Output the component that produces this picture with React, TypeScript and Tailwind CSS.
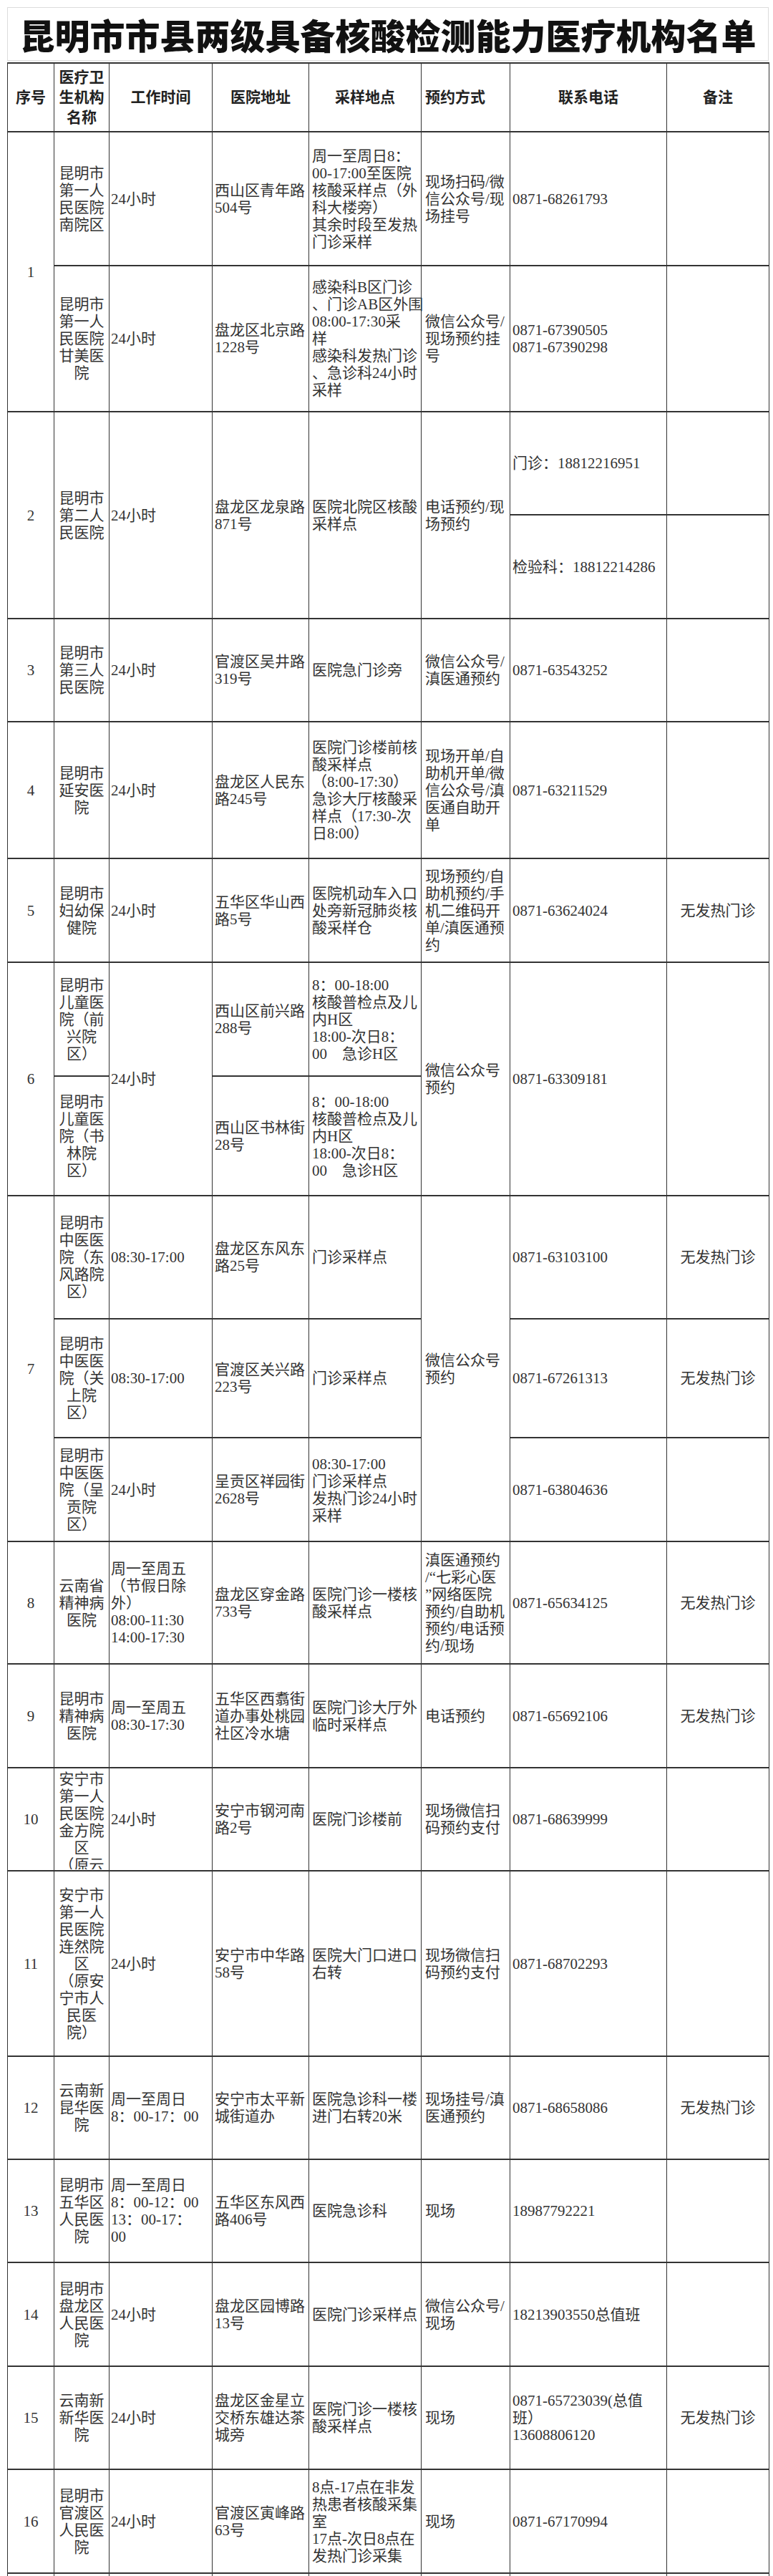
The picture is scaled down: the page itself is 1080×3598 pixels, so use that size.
import React from 'react'

// column paddings / alignment, in order: 序号 … 备注
const colCls = [
  'text-center',
  'text-center',
  'text-left pl-[2px]',
  'text-left pl-[3px]',
  'text-left pl-[4px]',
  'text-left pl-[5px]',
  'text-left pl-[3px]',
  'text-center',
]

const widths = ['w-[65px]', 'w-[77px]', 'w-[144px]', 'w-[135px]', 'w-[157px]', 'w-[124px]', 'w-[219px]', 'w-[143px]']

type TdProps = {
  c: number
  rs?: number
  children?: React.ReactNode
}

function Td({ c, rs, children }: TdProps) {
  return (
    <td
      rowSpan={rs}
      className={`border-x border-y-2 border-[#333] p-0 align-middle whitespace-pre text-[21px] leading-[24px] text-[#333] ${colCls[c]}`}
    >
      {children}
    </td>
  )
}

function Th({ c, children }: { c: number; children: React.ReactNode }) {
  return (
    <th
      className={`border-x border-y-2 border-[#333] p-0 align-middle whitespace-pre text-[21px] leading-[28px] font-bold text-[#222] ${
        c === 5 ? 'text-left pl-[5px]' : 'text-center'
      }`}
    >
      {children}
    </th>
  )
}

// simple row: 8 cells, no spans
function Row({ h, cells }: { h: string; cells: string[] }) {
  return (
    <tr className={h}>
      {cells.map((t, i) => (
        <Td key={i} c={i}>
          {t}
        </Td>
      ))}
    </tr>
  )
}

export default function App() {
  return (
    <div className="w-[1080px] bg-white pl-[10px] pr-[6px] pt-[10px] font-['Liberation_Serif','Noto_Sans_CJK_SC',serif]">
      {/* title */}
      <div className="h-[75px] border border-[#dcdcdc] flex items-center justify-center">
        <h1 className="text-[49px] leading-none font-black text-[#111] font-['Noto_Sans_CJK_SC',sans-serif]">
          昆明市市县两级具备核酸检测能力医疗机构名单
        </h1>
      </div>

      <table className="mt-[2px] w-[1064px] table-fixed border-collapse">
        <colgroup>
          {widths.map((w, i) => (
            <col key={i} className={w} />
          ))}
        </colgroup>
        <thead>
          <tr className="h-[96px]">
            <Th c={0}>序号</Th>
            <Th c={1}>{'医疗卫\n生机构\n名称'}</Th>
            <Th c={2}>工作时间</Th>
            <Th c={3}>医院地址</Th>
            <Th c={4}>采样地点</Th>
            <Th c={5}>预约方式</Th>
            <Th c={6}>联系电话</Th>
            <Th c={7}>备注</Th>
          </tr>
        </thead>
        <tbody>
          {/* 1 */}
          <tr className="h-[187px]">
            <Td c={0} rs={2}>1</Td>
            <Td c={1}>{'昆明市\n第一人\n民医院\n南院区'}</Td>
            <Td c={2}>24小时</Td>
            <Td c={3}>{'西山区青年路\n504号'}</Td>
            <Td c={4}>{'周一至周日8：\n00-17:00至医院\n核酸采样点（外\n科大楼旁）\n其余时段至发热\n门诊采样'}</Td>
            <Td c={5}>{'现场扫码/微\n信公众号/现\n场挂号'}</Td>
            <Td c={6}>0871-68261793</Td>
            <Td c={7} />
          </tr>
          <tr className="h-[204px]">
            <Td c={1}>{'昆明市\n第一人\n民医院\n甘美医\n院'}</Td>
            <Td c={2}>24小时</Td>
            <Td c={3}>{'盘龙区北京路\n1228号'}</Td>
            <Td c={4}>{'感染科B区门诊\n、门诊AB区外围\n08:00-17:30采\n样\n感染科发热门诊\n、急诊科24小时\n采样'}</Td>
            <Td c={5}>{'微信公众号/\n现场预约挂\n号'}</Td>
            <Td c={6}>{'0871-67390505\n0871-67390298'}</Td>
            <Td c={7} />
          </tr>

          {/* 2 */}
          <tr className="h-[144px]">
            <Td c={0} rs={2}>2</Td>
            <Td c={1} rs={2}>{'昆明市\n第二人\n民医院'}</Td>
            <Td c={2} rs={2}>24小时</Td>
            <Td c={3} rs={2}>{'盘龙区龙泉路\n871号'}</Td>
            <Td c={4} rs={2}>{'医院北院区核酸\n采样点'}</Td>
            <Td c={5} rs={2}>{'电话预约/现\n场预约'}</Td>
            <Td c={6}>门诊：18812216951</Td>
            <Td c={7} />
          </tr>
          <tr className="h-[145px]">
            <Td c={6}>检验科：18812214286</Td>
            <Td c={7} />
          </tr>

          <Row
            h="h-[144px]"
            cells={['3', '昆明市\n第三人\n民医院', '24小时', '官渡区吴井路\n319号', '医院急门诊旁', '微信公众号/\n滇医通预约', '0871-63543252', '']}
          />
          <Row
            h="h-[191px]"
            cells={[
              '4',
              '昆明市\n延安医\n院',
              '24小时',
              '盘龙区人民东\n路245号',
              '医院门诊楼前核\n酸采样点\n（8:00-17:30）\n急诊大厅核酸采\n样点（17:30-次\n日8:00）',
              '现场开单/自\n助机开单/微\n信公众号/滇\n医通自助开\n单',
              '0871-63211529',
              '',
            ]}
          />
          <Row
            h="h-[145px]"
            cells={[
              '5',
              '昆明市\n妇幼保\n健院',
              '24小时',
              '五华区华山西\n路5号',
              '医院机动车入口\n处旁新冠肺炎核\n酸采样仓',
              '现场预约/自\n助机预约/手\n机二维码开\n单/滇医通预\n约',
              '0871-63624024',
              '无发热门诊',
            ]}
          />

          {/* 6 */}
          <tr className="h-[159px]">
            <Td c={0} rs={2}>6</Td>
            <Td c={1}>{'昆明市\n儿童医\n院（前\n兴院\n区）'}</Td>
            <Td c={2} rs={2}>24小时</Td>
            <Td c={3}>{'西山区前兴路\n288号'}</Td>
            <Td c={4}>{'8：00-18:00\n核酸普检点及儿\n内H区\n18:00-次日8：\n00　急诊H区'}</Td>
            <Td c={5} rs={2}>{'微信公众号\n预约'}</Td>
            <Td c={6} rs={2}>0871-63309181</Td>
            <Td c={7} rs={2} />
          </tr>
          <tr className="h-[167px]">
            <Td c={1}>{'昆明市\n儿童医\n院（书\n林院\n区）'}</Td>
            <Td c={3}>{'西山区书林街\n28号'}</Td>
            <Td c={4}>{'8：00-18:00\n核酸普检点及儿\n内H区\n18:00-次日8：\n00　急诊H区'}</Td>
          </tr>

          {/* 7 */}
          <tr className="h-[172px]">
            <Td c={0} rs={3}>7</Td>
            <Td c={1}>{'昆明市\n中医医\n院（东\n风路院\n区）'}</Td>
            <Td c={2}>08:30-17:00</Td>
            <Td c={3}>{'盘龙区东风东\n路25号'}</Td>
            <Td c={4}>门诊采样点</Td>
            <Td c={5} rs={3}>{'微信公众号\n预约'}</Td>
            <Td c={6}>0871-63103100</Td>
            <Td c={7}>无发热门诊</Td>
          </tr>
          <tr className="h-[166px]">
            <Td c={1}>{'昆明市\n中医医\n院（关\n上院\n区）'}</Td>
            <Td c={2}>08:30-17:00</Td>
            <Td c={3}>{'官渡区关兴路\n223号'}</Td>
            <Td c={4}>门诊采样点</Td>
            <Td c={6}>0871-67261313</Td>
            <Td c={7}>无发热门诊</Td>
          </tr>
          <tr className="h-[145px]">
            <Td c={1}>{'昆明市\n中医医\n院（呈\n贡院\n区）'}</Td>
            <Td c={2}>24小时</Td>
            <Td c={3}>{'呈贡区祥园街\n2628号'}</Td>
            <Td c={4}>{'08:30-17:00\n门诊采样点\n发热门诊24小时\n采样'}</Td>
            <Td c={6}>0871-63804636</Td>
            <Td c={7} />
          </tr>

          <Row
            h="h-[171px]"
            cells={[
              '8',
              '云南省\n精神病\n医院',
              '周一至周五\n（节假日除\n外）\n08:00-11:30\n14:00-17:30',
              '盘龙区穿金路\n733号',
              '医院门诊一楼核\n酸采样点',
              '滇医通预约\n/“七彩心医\n”网络医院\n预约/自助机\n预约/电话预\n约/现场',
              '0871-65634125',
              '无发热门诊',
            ]}
          />
          <Row
            h="h-[145px]"
            cells={[
              '9',
              '昆明市\n精神病\n医院',
              '周一至周五\n08:30-17:30',
              '五华区西翥街\n道办事处桃园\n社区冷水塘',
              '医院门诊大厅外\n临时采样点',
              '电话预约',
              '0871-65692106',
              '无发热门诊',
            ]}
          />

          {/* 10: name overflows and is clipped */}
          <tr className="h-[144px]">
            <Td c={0}>10</Td>
            <Td c={1}>
              <div className="h-[140px] overflow-hidden pt-[2px]">{'安宁市\n第一人\n民医院\n金方院\n区\n（原云'}</div>
            </Td>
            <Td c={2}>24小时</Td>
            <Td c={3}>{'安宁市钢河南\n路2号'}</Td>
            <Td c={4}>医院门诊楼前</Td>
            <Td c={5}>{'现场微信扫\n码预约支付'}</Td>
            <Td c={6}>0871-68639999</Td>
            <Td c={7} />
          </tr>

          <Row
            h="h-[259px]"
            cells={[
              '11',
              '安宁市\n第一人\n民医院\n连然院\n区\n（原安\n宁市人\n民医\n院）',
              '24小时',
              '安宁市中华路\n58号',
              '医院大门口进口\n右转',
              '现场微信扫\n码预约支付',
              '0871-68702293',
              '',
            ]}
          />
          <Row
            h="h-[144px]"
            cells={[
              '12',
              '云南新\n昆华医\n院',
              '周一至周日\n8：00-17：00',
              '安宁市太平新\n城街道办',
              '医院急诊科一楼\n进门右转20米',
              '现场挂号/滇\n医通预约',
              '0871-68658086',
              '无发热门诊',
            ]}
          />
          <Row
            h="h-[144px]"
            cells={[
              '13',
              '昆明市\n五华区\n人民医\n院',
              '周一至周日\n8：00-12：00\n13：00-17：\n00',
              '五华区东风西\n路406号',
              '医院急诊科',
              '现场',
              '18987792221',
              '',
            ]}
          />
          <Row
            h="h-[145px]"
            cells={[
              '14',
              '昆明市\n盘龙区\n人民医\n院',
              '24小时',
              '盘龙区园博路\n13号',
              '医院门诊采样点',
              '微信公众号/\n现场',
              '18213903550总值班',
              '',
            ]}
          />
          <Row
            h="h-[144px]"
            cells={[
              '15',
              '云南新\n新华医\n院',
              '24小时',
              '盘龙区金星立\n交桥东雄达茶\n城旁',
              '医院门诊一楼核\n酸采样点',
              '现场',
              '0871-65723039(总值\n班）\n13608806120',
              '无发热门诊',
            ]}
          />
          <Row
            h="h-[145px]"
            cells={[
              '16',
              '昆明市\n官渡区\n人民医\n院',
              '24小时',
              '官渡区寅峰路\n63号',
              '8点-17点在非发\n热患者核酸采集\n室\n17点-次日8点在\n发热门诊采集',
              '现场',
              '0871-67170994',
              '',
            ]}
          />
          <Row h="h-[60px]" cells={['', '', '', '', '', '', '', '']} />
        </tbody>
      </table>
    </div>
  )
}
